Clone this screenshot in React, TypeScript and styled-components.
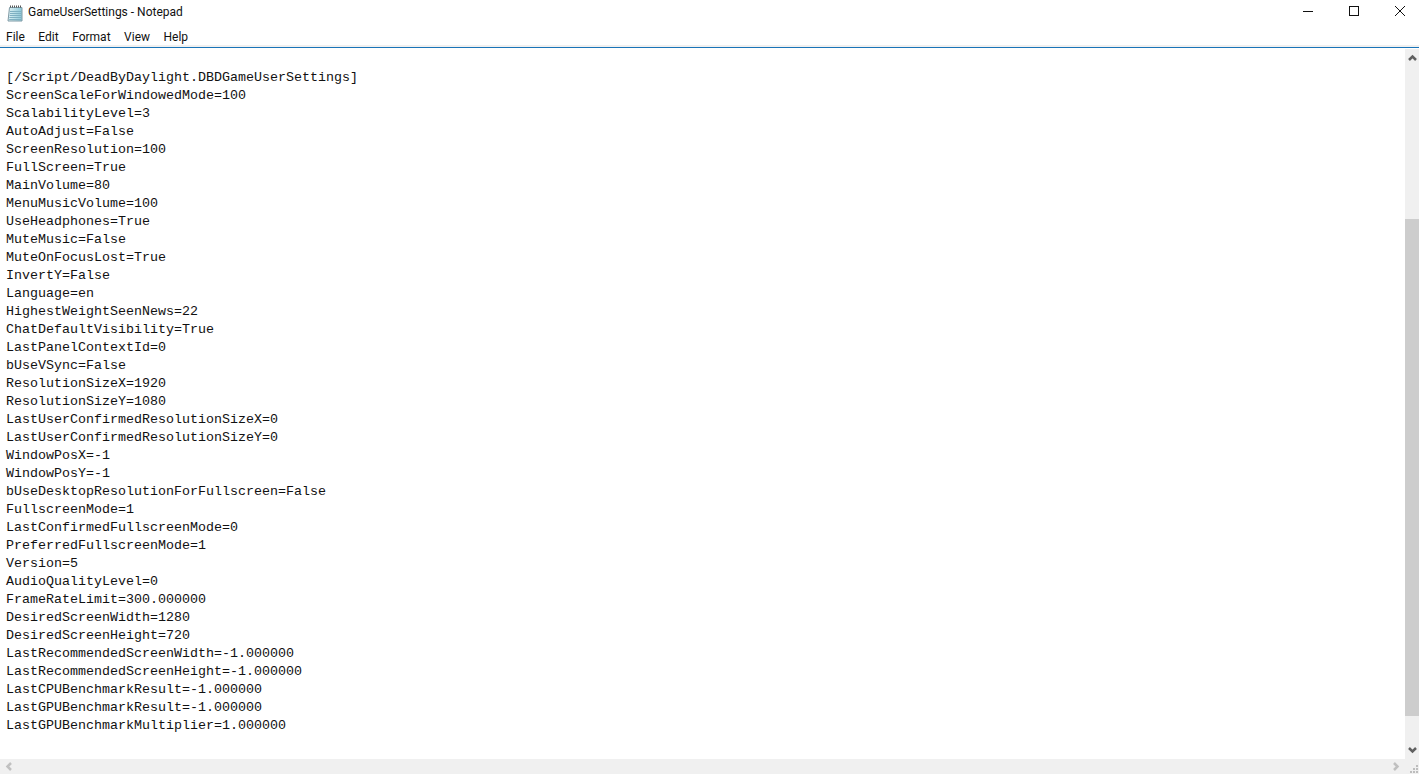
import styled, { createGlobalStyle } from 'styled-components';

const LINES = [
  '[/Script/DeadByDaylight.DBDGameUserSettings]',
  'ScreenScaleForWindowedMode=100',
  'ScalabilityLevel=3',
  'AutoAdjust=False',
  'ScreenResolution=100',
  'FullScreen=True',
  'MainVolume=80',
  'MenuMusicVolume=100',
  'UseHeadphones=True',
  'MuteMusic=False',
  'MuteOnFocusLost=True',
  'InvertY=False',
  'Language=en',
  'HighestWeightSeenNews=22',
  'ChatDefaultVisibility=True',
  'LastPanelContextId=0',
  'bUseVSync=False',
  'ResolutionSizeX=1920',
  'ResolutionSizeY=1080',
  'LastUserConfirmedResolutionSizeX=0',
  'LastUserConfirmedResolutionSizeY=0',
  'WindowPosX=-1',
  'WindowPosY=-1',
  'bUseDesktopResolutionForFullscreen=False',
  'FullscreenMode=1',
  'LastConfirmedFullscreenMode=0',
  'PreferredFullscreenMode=1',
  'Version=5',
  'AudioQualityLevel=0',
  'FrameRateLimit=300.000000',
  'DesiredScreenWidth=1280',
  'DesiredScreenHeight=720',
  'LastRecommendedScreenWidth=-1.000000',
  'LastRecommendedScreenHeight=-1.000000',
  'LastCPUBenchmarkResult=-1.000000',
  'LastGPUBenchmarkResult=-1.000000',
  'LastGPUBenchmarkMultiplier=1.000000',
];

const MENU = ['File', 'Edit', 'Format', 'View', 'Help'];

const GlobalStyle = createGlobalStyle`
  html, body {
    margin: 0;
    padding: 0;
    background: #fff;
    overflow: hidden;
  }
`;

const Window = styled.div`
  width: 1419px;
  height: 774px;
  display: flex;
  flex-direction: column;
  overflow: hidden;
  background: #fff;
  font-family: Roboto, 'Noto Sans', sans-serif;
  color: #000;
`;

const TitleBar = styled.div`
  height: 27px;
  flex: none;
  display: flex;
  align-items: center;
  padding-left: 7px;
`;

const Title = styled.span`
  margin-left: 5px;
  margin-top: -3px;
  font-size: 12px;
  color: #111;
`;

const WindowButtons = styled.div`
  margin-left: auto;
  margin-right: -4px;
  display: flex;
  height: 100%;
`;

const WindowButton = styled.div`
  width: 46px;
  height: 22px;
  display: flex;
  align-items: center;
  justify-content: center;
`;

const MenuBar = styled.div`
  height: 18px;
  box-sizing: border-box;
  flex: none;
  display: flex;
  align-items: center;
  gap: 13.5px;
  padding: 2px 0 0 6px;
  font-size: 12px;
  color: #111;
`;

const Divider = styled.div`
  flex: none;
  height: 3px;
  background: #f0f0f0;
  border-bottom: 1px solid #1a74b8;
  box-sizing: border-box;
`;

const Body = styled.div`
  flex: 1;
  min-height: 0;
  display: flex;
`;

const Editor = styled.pre`
  flex: 1;
  margin: 0;
  padding: 21px 0 0 6px;
  font-family: 'Liberation Mono', 'DejaVu Sans Mono', monospace;
  font-size: 13.33px;
  line-height: 18px;
  color: #111;
`;

const ScrollTrack = styled.div<{ $horizontal?: boolean }>`
  flex: none;
  display: flex;
  flex-direction: ${({ $horizontal }) => ($horizontal ? 'row' : 'column')};
  background: #f0f0f0;
  ${({ $horizontal }) => ($horizontal ? 'height: 15px;' : 'width: 14px; margin-top: 1px;')}
`;

const Arrow = styled.div<{ $horizontal?: boolean }>`
  flex: none;
  display: flex;
  align-items: center;
  justify-content: center;
  ${({ $horizontal }) => ($horizontal ? 'width: 17px;' : 'height: 17px;')}
`;

const TrackGap = styled.div<{ $size: number }>`
  flex: none;
  height: ${({ $size }) => $size}px;
`;

const Thumb = styled.div<{ $size: number }>`
  flex: none;
  height: ${({ $size }) => $size}px;
  background: #cdcdcd;
`;

const TrackFill = styled.div`
  flex: 1;
`;

const BottomBar = styled.div`
  flex: none;
  display: flex;
`;

const HorizontalTrack = styled(ScrollTrack)`
  flex: 1;
  justify-content: space-between;
`;

const Grip = styled.div`
  width: 14px;
  flex: none;
  background: #f0f0f0;
  display: flex;
  align-items: flex-end;
  justify-content: flex-end;
`;

const NotepadIcon = () => (
  <svg width="16" height="17" viewBox="0 0 16 17">
    <defs>
      <linearGradient id="page" x1="0" y1="0" x2="1" y2="0">
        <stop offset="0" stopColor="#dff1f4" />
        <stop offset="1" stopColor="#8cc8d8" />
      </linearGradient>
    </defs>
    <path d="M2.5 2.5H15V16H1Z" fill="url(#page)" stroke="#7f9aa5" />
    <path d="M3 6.5h11M3 8.5h11M2.7 10.5h11.3M2.4 12.5h11.6M2.2 14.5h11.8" stroke="#7fb0c2" />
    <path d="M3 1.5h12" stroke="#555" strokeWidth="2" strokeDasharray="1 1" />
  </svg>
);

const Chevron = ({ dir, color }: { dir: 'up' | 'down' | 'left' | 'right'; color: string }) => {
  const rotate = { up: 0, right: 90, down: 180, left: 270 }[dir];
  return (
    <svg width="9" height="7" viewBox="0 0 9 7" style={{ transform: `rotate(${rotate}deg)` }}>
      <path d="M1 6 4.5 2.5 8 6" fill="none" stroke={color} strokeWidth="2.5" />
    </svg>
  );
};

export default function App() {
  return (
    <>
      <GlobalStyle />
      <Window>
        <TitleBar>
          <NotepadIcon />
          <Title>GameUserSettings - Notepad</Title>
          <WindowButtons>
            <WindowButton>
              <svg width="10" height="10" viewBox="0 0 10 10">
                <path d="M0 5.5h10" stroke="#111" />
              </svg>
            </WindowButton>
            <WindowButton>
              <svg width="10" height="10" viewBox="0 0 10 10">
                <rect x="0.5" y="0.5" width="9" height="9" fill="none" stroke="#111" />
              </svg>
            </WindowButton>
            <WindowButton>
              <svg width="10" height="10" viewBox="0 0 10 10">
                <path d="M0 0 10 10M10 0 0 10" stroke="#111" />
              </svg>
            </WindowButton>
          </WindowButtons>
        </TitleBar>
        <MenuBar>
          {MENU.map((m) => (
            <span key={m}>{m}</span>
          ))}
        </MenuBar>
        <Divider />
        <Body>
          <Editor>{LINES.join('\n')}</Editor>
          <ScrollTrack>
            <Arrow>
              <Chevron dir="up" color="#606060" />
            </Arrow>
            <TrackGap $size={153} />
            <Thumb $size={497} />
            <TrackFill />
            <Arrow>
              <Chevron dir="down" color="#606060" />
            </Arrow>
          </ScrollTrack>
        </Body>
        <BottomBar>
          <HorizontalTrack $horizontal>
            <Arrow $horizontal>
              <Chevron dir="left" color="#c0c0c0" />
            </Arrow>
            <Arrow $horizontal>
              <Chevron dir="right" color="#c0c0c0" />
            </Arrow>
          </HorizontalTrack>
          <Grip>
            <svg width="12" height="12" viewBox="0 0 12 12" fill="#bdbdbd">
              <rect x="9" y="3" width="2" height="2" />
              <rect x="6" y="6" width="2" height="2" />
              <rect x="9" y="6" width="2" height="2" />
              <rect x="3" y="9" width="2" height="2" />
              <rect x="6" y="9" width="2" height="2" />
              <rect x="9" y="9" width="2" height="2" />
            </svg>
          </Grip>
        </BottomBar>
      </Window>
    </>
  );
}
